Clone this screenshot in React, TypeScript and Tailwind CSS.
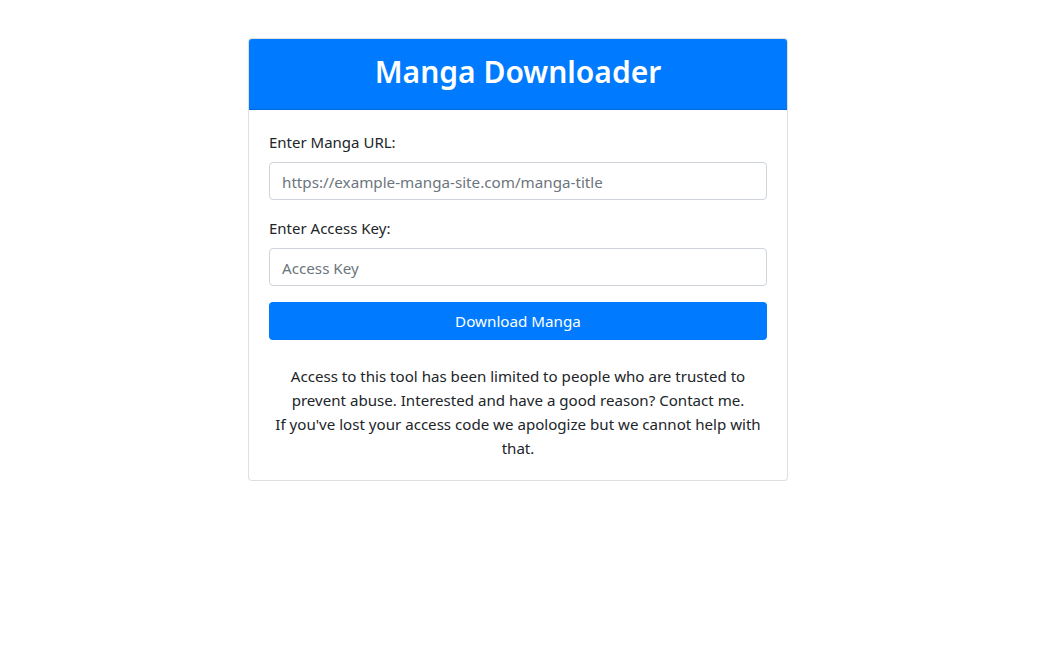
export default function App() {
  return (
    <div className="min-h-screen bg-white pt-[38px] text-[#212529]" style={{ fontFamily: '"Noto Sans", "Open Sans", sans-serif' }}>
      <div className="ml-[248px] w-[540px] rounded border border-black/[.125] bg-white">
        <div className="flex h-[71px] items-center justify-center rounded-t-[3px] border-b border-black/[.125] bg-[#007bff] pb-[5px]">
          <h1 className="text-[30px] font-semibold leading-tight text-white">Manga Downloader</h1>
        </div>
        <div className="p-5">
          <div className="mb-4">
            <label className="mb-2 block pt-px text-[15px] leading-[23px]">Enter Manga URL:</label>
            <input
              type="text"
              placeholder="https://example-manga-site.com/manga-title"
              className="block h-[38px] w-full rounded border border-[#ced4da] px-3 pt-px text-[15.2px] text-[#495057] placeholder:text-[#6c757d] outline-none"
            />
          </div>
          <div className="mb-4">
            <label className="mb-2 block pt-px text-[15px] leading-[23px]">Enter Access Key:</label>
            <input
              type="password"
              placeholder="Access Key"
              className="block h-[38px] w-full rounded border border-[#ced4da] px-3 pt-px text-[15.2px] text-[#495057] placeholder:text-[#6c757d] outline-none"
            />
          </div>
          <button type="button" className="block h-[38px] w-full rounded bg-[#007bff] text-[15.2px] text-white">
            Download Manga
          </button>
          <p className="mt-6 text-center text-[15.1px] leading-6">
            Access to this tool has been limited to people who are trusted to prevent abuse. Interested and have a good reason? Contact me.
            <br />
            If you've lost your access code we apologize but we cannot help with that.
          </p>
        </div>
      </div>
    </div>
  )
}
